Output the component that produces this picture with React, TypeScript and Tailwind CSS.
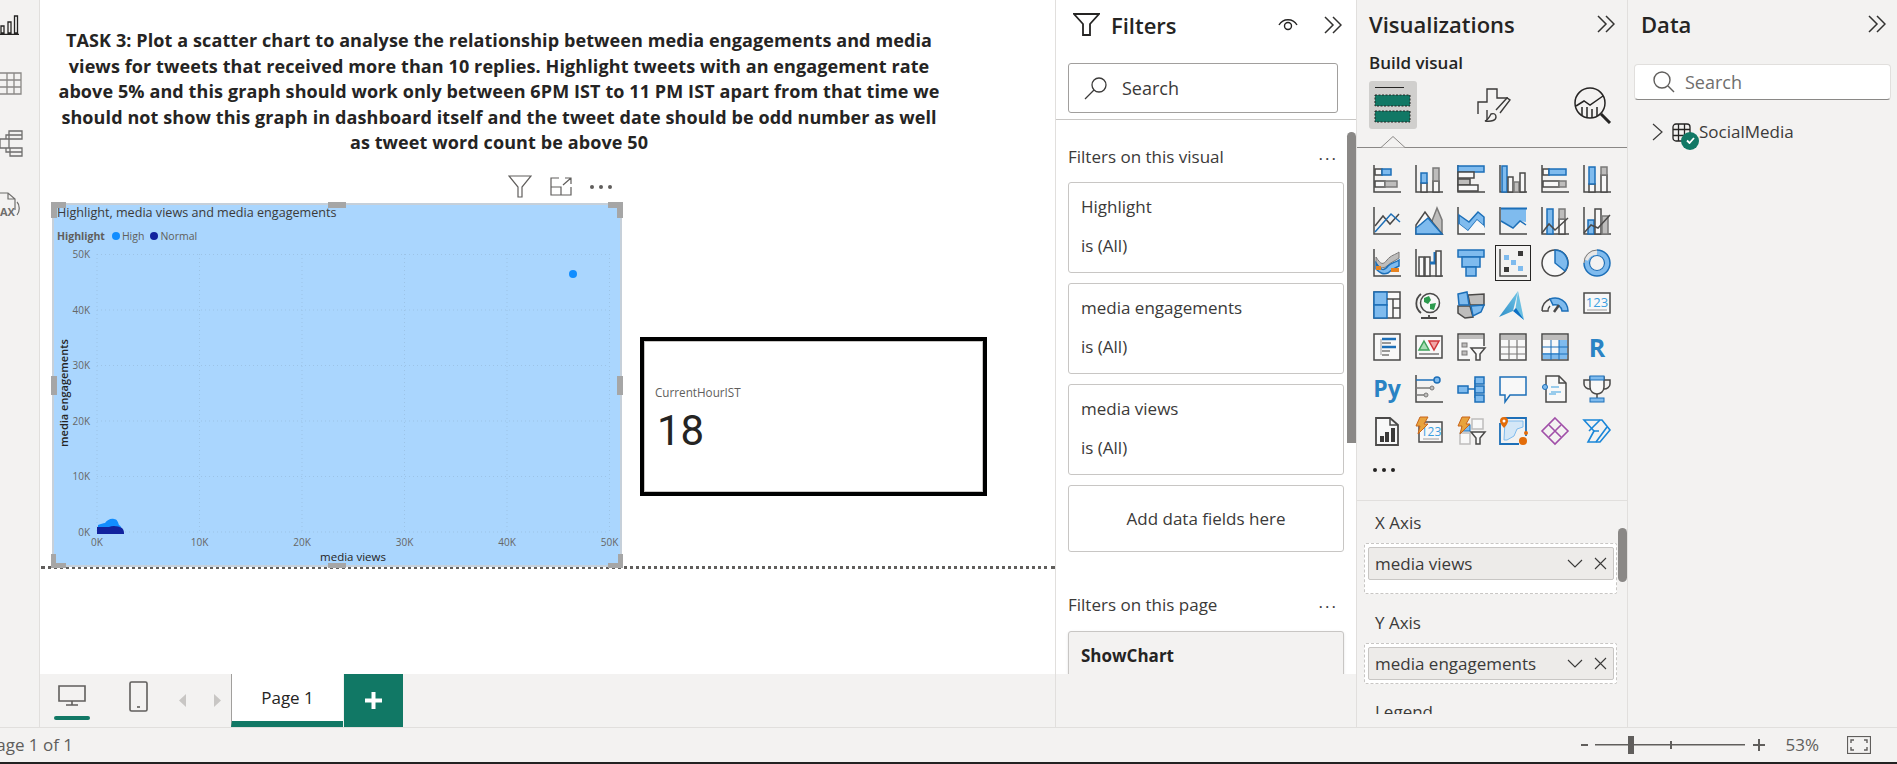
import type { ReactNode } from "react"

const D = "#4a4948"
const B = "#1c6fb8"
const L = "#7fbbee"
const G = "#bebdbc"
const W = "#f8f8f8"
const M = "#7a7978"

function Box({ x, y, w, h, f = W, s = D }: { x: number; y: number; w: number; h: number; f?: string; s?: string }) {
  return <rect x={x} y={y} width={w} height={h} fill={f} stroke={s} strokeWidth="1.5" />
}
const Ax = () => <path d="M1 0V27H28" fill="none" stroke={D} strokeWidth="1.5" />
const Line = ({ p, c = D, w = 1.5 }: { p: string; c?: string; w?: number }) => (
  <polyline points={p} fill="none" stroke={c} strokeWidth={w} />
)
const Poly = ({ p, f = L, s = B }: { p: string; f?: string; s?: string }) => (
  <polygon points={p} fill={f} stroke={s} strokeWidth="1.5" />
)

const vizIcons: ReactNode[] = [
  <><Ax /><Box x={2} y={4} w={7} h={6} /><Box x={9} y={4} w={9} h={6} f={L} s={B} /><Box x={2} y={16} w={10} h={6} /><Box x={12} y={16} w={12} h={6} f={G} s={M} /></>,
  <><Ax /><Box x={6} y={18} w={6} h={9} /><Box x={6} y={8} w={6} h={10} f={L} s={B} /><Box x={18} y={16} w={6} h={11} /><Box x={18} y={3} w={6} h={13} f={G} s={M} /></>,
  <><Ax /><Box x={1} y={1} w={26} h={6} f={L} s={B} /><Box x={1} y={7} w={16} h={6} /><Box x={1} y={14} w={12} h={6} f={G} s={D} /><Box x={1} y={20} w={20} h={6} /></>,
  <><Ax /><Box x={3} y={1} w={5} h={26} f={L} s={B} /><Box x={9} y={12} w={5} h={15} /><Box x={15} y={17} w={5} h={10} f={G} s={M} /><Box x={21} y={8} w={5} h={19} /></>,
  <><Ax /><Box x={2} y={4} w={6} h={6} /><Box x={8} y={4} w={17} h={6} f={L} s={B} /><Box x={2} y={16} w={16} h={6} /><Box x={18} y={16} w={7} h={6} f={G} s={M} /></>,
  <><Ax /><Box x={6} y={19} w={6} h={8} /><Box x={6} y={2} w={6} h={17} f={L} s={B} /><Box x={18} y={10} w={6} h={17} /><Box x={18} y={2} w={6} h={8} f={G} s={M} /></>,

  <><Ax /><Line p="2,19 10,9 17,17 26,7" /><Line p="2,25 10,16 18,7 27,15" c={B} /></>,
  <><Poly p="17,14 22,1 27,13 27,27 17,27" f={G} s={M} /><Poly p="1,27 1,18 10,5 18,16 27,27" f={W} s={D} /><Poly p="1,27 1,21 6,17 13,11 27,27" f={L} s={B} /></>,
  <><Ax /><Poly p="2,8 12,15 21,5 27,10 27,19 20,13 11,24 2,17" /><polygon points="2,17 11,24 20,13 27,19 27,26 2,26" fill={W} /></>,
  <><Ax /><polygon points="2,2 27,2 27,15 21,14 14,20 2,14" fill={L} /><Line p="2,14 14,21 21,14 27,18" c={B} /><path d="M2 1.5H28" stroke={B} strokeWidth="2" /></>,
  <><Ax /><Box x={6} y={2} w={6} h={25} f={L} s={B} /><Box x={18} y={12} w={6} h={15} /><Box x={18} y={2} w={6} h={10} f={G} s={M} /><Line p="1,26 8,17 14,23 27,11" /></>,
  <><Ax /><Box x={5} y={13} w={6} h={14} f={L} s={B} /><Box x={12} y={2} w={6} h={25} /><Box x={19} y={9} w={6} h={18} f={G} s={M} /><Line p="1,26 8,18 15,21 27,8" /></>,

  <><Ax /><path d="M3 8C8 16 10 16 14 11C18 6 22 6 26 3V9C22 12 18 13 14 17C10 20 7 19 3 14Z" fill={G} stroke={M} /><path d="M3 14C8 22 11 22 15 17C19 13 22 14 26 11V17C22 19 19 20 15 24C10 26 7 24 3 20Z" fill={L} stroke={B} strokeWidth="1.5" /><rect x="3" y="17" width="5" height="4" fill="#e8831f" /><rect x="18" y="19" width="8" height="4" fill="#e8831f" /></>,
  <><Ax /><Box x={4} y={8} w={5} h={19} /><Box x={10} y={8} w={5} h={19} /><path d="M15 14H20V3" fill="none" stroke={B} strokeWidth="3" /><Box x={21} y={2} w={5} h={25} /></>,
  <><Box x={1} y={1} w={26} h={7} f={L} s={B} /><Box x={5} y={8} w={18} h={10} f={L} s={B} /><Box x={9} y={18} w={10} h={9} f={L} s={B} /></>,
  <><Ax /><rect x="5" y="6" width="5" height="5" fill={L} /><rect x="19" y="2" width="5" height="5" fill="#3b3a39" /><rect x="12" y="11" width="5" height="5" fill={L} /><rect x="5" y="18" width="5" height="5" fill="#3b3a39" /><rect x="19" y="17" width="5" height="5" fill={L} /></>,
  <><circle cx="14" cy="14" r="13" fill={W} stroke={D} strokeWidth="1.5" /><path d="M14 14V1A13 13 0 0 1 24 22Z" fill={L} stroke={B} strokeWidth="1.5" /></>,
  <><circle cx="14" cy="14" r="10.5" fill="none" stroke={L} strokeWidth="5" /><path d="M2.5 11A11 11 0 0 1 14 3.5" fill="none" stroke="#e8e7e6" strokeWidth="5" /><path d="M1 14A13 13 0 0 1 14 1" fill="none" stroke={M} strokeWidth="1" /><path d="M14 1A13 13 0 1 1 1 14" fill="none" stroke={B} strokeWidth="1.5" /><circle cx="14" cy="14" r="7.5" fill="#f3f2f1" stroke={B} strokeWidth="1.2" /></>,

  <><Box x={1} y={1} w={26} h={26} /><Box x={1} y={1} w={13} h={13} f={L} s={B} /><Box x={1} y={14} w={13} h={13} f={L} s={B} /><path d="M14 8H27M20 8V27M20 17H27" stroke={D} strokeWidth="1.5" /></>,
  <><path d="M6 3A12 12 0 0 0 6 22M14 24V27M6 27H22" fill="none" stroke={D} strokeWidth="1.8" /><circle cx="15" cy="12" r="9.5" fill={W} stroke={D} strokeWidth="1.5" /><path d="M9 7L14 5L16 9L13 13L9 11ZM15 13L21 12L19 19L15 18Z" fill="#2d9b4e" /></>,
  <><Poly p="1,15 13,15 16,26 8,27 1,22" f={G} s={D} /><polygon points="11,4 27,3 27,14 13,14" fill={G} stroke={D} strokeWidth="1.5" /><Poly p="1,3 10,1 12,14 2,14" /><Poly p="14,15 27,14 24,21 16,25" /></>,
  <><defs><linearGradient id="azm" x1="0" y1="1" x2="1" y2="0"><stop offset="0" stopColor="#2f8fc8" /><stop offset="1" stopColor="#6fc4e6" /></linearGradient></defs><polygon points="19,0 0,26 14,20" fill="url(#azm)" /><polygon points="19,0 25,29 16,21" fill="#69bfe2" /><polygon points="14,20 25,29 17,17" fill="#0c6fc4" /></>,
  <><path d="M1 20A13 13 0 0 1 9 8" fill="none" stroke={D} strokeWidth="1.4" /><path d="M9 8A13 13 0 0 1 27 20H21A7 7 0 0 0 12 14Z" fill={L} stroke={B} strokeWidth="1.5" /><path d="M1 20H7A7 7 0 0 1 9 15" fill="none" stroke={D} strokeWidth="1.5" /><path d="M13 21L18 14" stroke={D} strokeWidth="2.5" /></>,
  <><Box x={1} y={2} w={26} h={20} f={W} s={D} /><path d="M4 19H24" stroke={G} strokeWidth="1.5" /><text x="14" y="16" textAnchor="middle" fontSize="13" fill="#3b9fe0">123</text></>,

  <><Box x={1} y={1} w={26} h={26} /><path d="M8 6V22" stroke={G} strokeWidth="1.5" /><path d="M9 6H23M9 14H23" stroke={B} strokeWidth="2.5" /><path d="M9 10H18M9 18H17M9 22H16" stroke={M} strokeWidth="1.5" /></>,
  <><Box x={1} y={3} w={26} h={22} /><path d="M4 21H24" stroke={M} strokeWidth="1.5" /><polygon points="9,8 14,17 4,17" fill="#a9dbb4" stroke="#3ea35a" strokeWidth="1.5" /><polygon points="14,8 24,8 19,17" fill="#f1a6a6" stroke="#d13438" strokeWidth="1.5" /></>,
  <><path d="M13 27H1V1H27V13" fill={W} stroke={D} strokeWidth="1.5" /><rect x="2" y="2" width="24" height="4" fill={G} /><rect x="5" y="10" width="5" height="4" fill={G} stroke={M} /><rect x="5" y="18" width="5" height="4" fill={G} stroke={M} /><path d="M14 15H28L23 21V27H19V21Z" fill={W} stroke={D} strokeWidth="1.5" /></>,
  <><Box x={1} y={1} w={26} h={26} /><rect x="2" y="2" width="24" height="5" fill={G} /><path d="M10 7V27M18 7V27M1 14H27M1 21H27" stroke={M} strokeWidth="1.2" /></>,
  <><Box x={1} y={1} w={26} h={26} /><rect x="2" y="2" width="24" height="5" fill={G} /><rect x="18" y="7" width="8" height="19" fill={L} /><rect x="2" y="20" width="24" height="6" fill={L} /><path d="M10 7V27M18 7V27M1 14H27M1 21H27" stroke={B} strokeWidth="1" /></>,
  <text x="14" y="24" textAnchor="middle" fontSize="25" fontWeight="700" fill="#2a83c4">R</text>,

  <text x="14" y="22" textAnchor="middle" fontSize="23" fontWeight="700" fill="#2a83c4">Py</text>,
  <><Ax /><path d="M1 5H20" stroke={B} strokeWidth="1.5" /><circle cx="22" cy="5" r="3" fill={L} stroke={B} strokeWidth="1.5" /><path d="M1 13H15M1 20H9" stroke={M} strokeWidth="1.5" /><circle cx="17" cy="13" r="2" fill={G} stroke={M} /><circle cx="11" cy="20" r="2" fill={G} stroke={M} /></>,
  <><Box x={1} y={11} w={10} h={7} f={L} s={B} /><path d="M11 14H18M18 5V23" stroke={B} strokeWidth="1.5" fill="none" /><Box x={18} y={2} w={9} h={7} f={L} s={B} /><Box x={18} y={11} w={9} h={7} f={L} s={B} /><Box x={18} y={20} w={9} h={7} f={L} s={B} /></>,
  <path d="M1 2H27V20H11L6 27V20H1Z" fill={W} stroke={B} strokeWidth="1.5" />,
  <><path d="M5 1H18L25 8V27H5Z" fill={W} stroke={D} strokeWidth="1.5" /><path d="M18 1V8H25" fill="none" stroke={D} strokeWidth="1.5" /><circle cx="4" cy="12" r="2.5" fill={L} stroke={B} /><path d="M10 12H18M10 17H20M8 19H15" stroke="#3b9fe0" strokeWidth="1.2" /></>,
  <><path d="M7 2H21V12C21 17 17 19 14 19C11 19 7 17 7 12Z" fill={W} stroke={D} strokeWidth="1.5" /><path d="M7 5H1V9C1 12 4 14 7 14M21 5H27V9C27 12 24 14 21 14M14 19V23" fill="none" stroke={D} strokeWidth="1.5" /><rect x="7" y="1" width="14" height="4" fill={L} stroke={B} /><rect x="7" y="23" width="14" height="4" fill={L} stroke={B} /></>,

  <><path d="M3 1H17L25 8V28H3Z" fill={W} stroke={D} strokeWidth="1.8" /><path d="M17 1V8H25" fill="none" stroke={D} strokeWidth="1.5" /><rect x="7" y="19" width="4" height="6" fill="#3b3a39" /><rect x="12" y="15" width="4" height="10" fill="#3b3a39" /><rect x="18" y="11" width="4" height="14" fill="#3b3a39" /></>,
  <><Box x={4} y={5} w={23} h={20} f={W} s={D} /><path d="M8 22H24" stroke={G} strokeWidth="1.5" /><text x="16" y="19" textAnchor="middle" fontSize="12" fill="#3b9fe0">123</text><polygon points="5,0 13,0 9,7 13,7 3,17 5,9 1,9" fill="#e8a33d" stroke="#c8651b" /></>,
  <><rect x="15" y="2" width="11" height="10" fill={W} stroke={G} strokeWidth="1.5" /><rect x="3" y="16" width="10" height="11" fill={W} stroke={G} strokeWidth="1.5" /><rect x="5" y="8" width="8" height="6" fill={L} stroke={B} /><path d="M14 15H28L23 21V27H19V21Z" fill={W} stroke={D} strokeWidth="1.5" /><polygon points="5,0 13,0 9,7 13,7 3,17 5,9 1,9" fill="#e8a33d" stroke="#c8651b" /></>,
  <><path d="M5 1H27V19M20 27H1V6" fill="none" stroke={B} strokeWidth="1.8" /><path d="M6 4H24V10L18 12L15 19L8 23H5Z" fill="#d4e7f7" stroke={L} /><path d="M5 0C2 0 1 2 1 4C1 7 5 11 5 11C5 11 9 7 9 4C9 2 8 0 5 0Z" fill="#e36c09" /><circle cx="5" cy="4" r="1.5" fill="#fff" /><circle cx="24" cy="24" r="4" fill="#e36c09" /><circle cx="27" cy="16" r="2" fill="#e36c09" /></>,
  <g fill="none" stroke="#a04fa8" strokeWidth="1.6"><polygon points="14,1 27,14 14,27 1,14" /><path d="M8 8L20 20M20 8L8 20" /></g>,
  <g fill="none" stroke="#1a86d8" strokeWidth="1.6"><polygon points="1,3 19,3 27,13 17,25 5,25 11,14" /><path d="M17 3L6 14M24 10L13 25M11 14H16" /></g>,
]

function Chevrons() {
  return (
    <svg width="18" height="18" viewBox="0 0 18 18" fill="none" stroke="#323130" strokeWidth="1.5">
      <path d="M1 1l8 8-8 8M9 1l8 8-8 8" />
    </svg>
  )
}

function Filtercard({ title, value }: { title: string; value: string }) {
  return (
    <div className="h-[91px] w-[276px] rounded-[3px] border border-[#c8c6c4] bg-white pt-[12px] pl-[12px] text-[17px] leading-[24px] text-[#3b3a39]">
      <div>{title}</div>
      <div className="mt-[15px]">{value}</div>
    </div>
  )
}

function Well({ name, className }: { name: string; className: string }) {
  return (
    <div className={`ml-[7px] w-[253px] rounded-[2px] border border-dashed border-[#c8c6c4] bg-white pt-[3px] pl-[3px] ${className}`}>
      <div className="flex h-[33px] w-[246px] items-center justify-between rounded-[2px] border border-[#c8c6c4] bg-[#edebe9] pr-[6px] pl-[6px] text-[17px] text-[#3b3a39]">
        <span>{name}</span>
        <svg width="40" height="14" viewBox="0 0 40 14" fill="none" stroke="#3b3a39" strokeWidth="1.1">
          <path d="M1 3l7 7 7-7M28 1l11 11M39 1L28 12" />
        </svg>
      </div>
    </div>
  )
}

function ScatterPlot() {
  const xs = [0, 1, 2, 3, 4, 5]
  return (
    <svg className="absolute inset-0" width="566" height="360" viewBox="2 2 566 360" fontSize="10" fill="#666666">
      {xs.map((i) => (
        <g key={i}>
          <line x1={45 + i * 102.5} x2={45 + i * 102.5} y1="51" y2="329" stroke="#9cc3e6" strokeDasharray="1 3" />
          <line x1="45" x2="557" y1={329 - i * 55.5} y2={329 - i * 55.5} stroke="#9cc3e6" strokeDasharray="1 3" />
          <text x="38" y={332.5 - i * 55.5} textAnchor="end">{i * 10}K</text>
          <text x={45 + i * 102.5} y="343" textAnchor="middle">{i * 10}K</text>
        </g>
      ))}
      <circle cx="521" cy="71" r="4" fill="#118dff" />
      <path d="M46 331v-9c3-1 5-2 7-2 2-3 6-5 9-4 3 0 4 3 5 6 2 1 3 3 3 9Z" fill="#118dff" />
      <path d="M45 331v-7h12c4-2 9-1 13 1 2 2 2 4 2 6Z" fill="#12239e" />
    </svg>
  )
}

function Handles() {
  return (
    <>
      <div className="absolute -top-[3px] -left-[3px] h-[16px] w-[15px] border-t-[6px] border-l-[6px] border-[#a6a6a6]" />
      <div className="absolute -top-[3px] -right-[3px] h-[16px] w-[15px] border-t-[6px] border-r-[6px] border-[#a6a6a6]" />
      <div className="absolute -bottom-[3px] -left-[3px] h-[14px] w-[15px] border-b-[5px] border-l-[5px] border-[#a6a6a6]" />
      <div className="absolute -right-[3px] -bottom-[3px] h-[14px] w-[15px] border-r-[5px] border-b-[5px] border-[#a6a6a6]" />
      <div className="absolute -top-[3px] left-[274px] h-[6px] w-[18px] bg-[#a6a6a6]" />
      <div className="absolute -bottom-[3px] left-[274px] h-[5px] w-[18px] bg-[#a6a6a6]" />
      <div className="absolute top-[171px] -left-[3px] h-[19px] w-[6px] bg-[#a6a6a6]" />
      <div className="absolute top-[171px] -right-[3px] h-[19px] w-[6px] bg-[#a6a6a6]" />
    </>
  )
}

function Canvas() {
  return (
    <main className="relative min-h-0 flex-1 overflow-hidden bg-white">
      <div className="mt-[28px] w-[918px] text-center text-[18px] leading-[25.5px] font-bold tracking-[0.1px] whitespace-nowrap text-[#252423]">
        <div>TASK 3: Plot a scatter chart to analyse the relationship between media engagements and media</div>
        <div>views for tweets that received more than 10 replies. Highlight tweets with an engagement rate</div>
        <div>above 5% and this graph should work only between 6PM IST to 11 PM IST apart from that time we</div>
        <div>should not show this graph in dashboard itself and the tweet date should be odd number as well</div>
        <div>as tweet word count be above 50</div>
      </div>

      <div className="mt-[47.5px] flex items-start pl-[12px]">
        <div className="relative h-[364px] w-[570px] shrink-0 border-2 border-[#c6d0da] bg-[#aad6fe]">
          <ScatterPlot />
          <div className="relative pl-[3px] text-[12.6px] leading-[16px] text-[#3b3a39]">Highlight, media views and media engagements</div>
          <div className="relative mt-[8px] flex items-center pl-[3px] text-[10.5px] leading-[14px] text-[#605e5c]">
            <b>Highlight</b>
            <span className="ml-[7px] h-[8px] w-[8px] rounded-full bg-[#118dff]" />
            <span className="ml-[2px]">High</span>
            <span className="ml-[6px] h-[8px] w-[8px] rounded-full bg-[#12239e]" />
            <span className="ml-[2px]">Normal</span>
          </div>
          <div className="absolute top-[188px] left-[9px] -translate-x-1/2 -translate-y-1/2 -rotate-90 text-[11px] leading-none font-semibold whitespace-nowrap text-[#252423]">media engagements</div>
          <div className="absolute top-[345px] left-[299px] -translate-x-1/2 text-[11.5px] leading-[14px] font-medium whitespace-nowrap text-[#252423]">media views</div>
          <Handles />
          <div className="absolute -top-[30px] right-[8px] flex items-center gap-[18px]">
            <svg width="24" height="23" viewBox="0 0 24 23" fill="none" stroke="#605e5c" strokeWidth="1.2">
              <path d="M1 1h22l-9 11v10h-4V12Z" />
            </svg>
            <svg width="22" height="19" viewBox="0 0 22 19" fill="none" stroke="#605e5c" strokeWidth="1.2">
              <path d="M9 1H1v17h20v-8M1 10h10v8M13 8l8-7M15 1h6v6" />
            </svg>
            <svg width="22" height="4" viewBox="0 0 22 4" fill="#605e5c">
              <circle cx="2" cy="2" r="2" />
              <circle cx="11" cy="2" r="2" />
              <circle cx="20" cy="2" r="2" />
            </svg>
          </div>
        </div>

        <div className="mt-[134px] ml-[18px] h-[159px] w-[347px] shrink-0 border-4 border-black bg-white">
          <div className="h-full border border-[#c8c6c4] pt-[42px] pl-[10px]">
            <div className="text-[11.7px] leading-[16px] text-[#605e5c]">CurrentHourIST</div>
            <div className="mt-[6px] pl-[2px] font-['Roboto',sans-serif] text-[42px] leading-[50px] text-[#252423]">18</div>
          </div>
        </div>
      </div>
      <div className="-mt-[1px] ml-[1px] border-t-[3px] border-dotted border-[#605e5c]" />
    </main>
  )
}

function TabBar() {
  return (
    <div className="flex h-[53px] bg-[#f3f2f1]">
      <div className="ml-[14px] flex w-[36px] flex-col items-center pt-[11px]">
        <svg width="28" height="21" viewBox="0 0 28 21" fill="none" stroke="#605e5c" strokeWidth="1.6">
          <path d="M1 1h26v15H1ZM14 16v4M8 20h12" />
        </svg>
        <div className="mt-[10px] h-[4px] w-[36px] rounded-full bg-[#117865]" />
      </div>
      <svg className="mt-[7px] ml-[39px]" width="19" height="31" viewBox="0 0 19 31" fill="none" stroke="#605e5c" strokeWidth="1.6">
        <rect x="1" y="1" width="17" height="29" rx="1.5" />
        <path d="M8 26h3" />
      </svg>
      <svg className="mt-[20px] ml-[31px]" width="8" height="13" viewBox="0 0 8 13" fill="#c8c6c4">
        <path d="M7 0v13L0 6.5Z" />
      </svg>
      <svg className="mt-[20px] ml-[26px]" width="8" height="13" viewBox="0 0 8 13" fill="#c8c6c4">
        <path d="M1 0v13l7-6.5Z" />
      </svg>
      <div className="ml-[10px] flex w-[112px] items-center justify-center border-b-[6px] border-l border-b-[#117865] border-l-[#a19f9d] bg-white pt-[1px] text-[17px] font-medium text-[#252423]">Page 1</div>
      <div className="flex w-[60px] items-center justify-center border-l border-[#f3f2f1] bg-[#117865]">
        <svg width="17" height="17" viewBox="0 0 17 17" fill="#ffffff">
          <path d="M6.5 0h4v6.5H17v4h-6.5V17h-4v-6.5H0v-4h6.5Z" />
        </svg>
      </div>
    </div>
  )
}

function Filters() {
  return (
    <aside className="relative flex w-[302px] shrink-0 flex-col border-r border-l border-[#e1dfdd] bg-white">
      <div className="flex h-[50px] items-center pr-[14px] pb-[1px] pl-[17px] text-[#252423]">
        <svg width="27" height="23" viewBox="0 0 27 23" fill="none" stroke="#252423" strokeWidth="1.8">
          <path d="M1 1h25l-9 10v11h-7V11Z" />
        </svg>
        <span className="ml-[11px] text-[22px] leading-none font-semibold">Filters</span>
        <svg className="mr-[26px] ml-auto" width="20" height="13" viewBox="0 0 20 13" fill="none" stroke="#252423" strokeWidth="1.4">
          <path d="M1 7C5 0 15 0 19 7" />
          <circle cx="10" cy="8" r="3.5" />
        </svg>
        <Chevrons />
      </div>
      <div className="mt-[13px] ml-[12px] flex h-[50px] w-[270px] items-center rounded-[3px] border border-[#a19f9d] pl-[15px] text-[18px] text-[#3b3a39]">
        <svg width="24" height="23" viewBox="0 0 24 23" fill="none" stroke="#3b3a39" strokeWidth="1.3">
          <circle cx="15" cy="8" r="7" />
          <path d="M10 13L1 22" />
        </svg>
        <span className="ml-[14px]">Search</span>
      </div>
      <div className="mt-[6px] border-b border-[#c8c6c4]" />

      <div className="min-h-0 flex-1 overflow-hidden pl-[12px]">
        <div className="flex h-[62px] w-[270px] justify-between pt-[25px] text-[17px] leading-[24px] text-[#3b3a39]">
          <span>Filters on this visual</span>
          <span className="mt-[-3px] tracking-[2px]">...</span>
        </div>
        <div className="flex flex-col gap-[10px]">
          <Filtercard title="Highlight" value="is (All)" />
          <Filtercard title="media engagements" value="is (All)" />
          <Filtercard title="media views" value="is (All)" />
          <div className="flex h-[67px] w-[276px] items-center justify-center rounded-[3px] border border-[#c8c6c4] pt-[1px] text-[17px] text-[#3b3a39]">Add data fields here</div>
        </div>
        <div className="flex h-[79px] w-[270px] justify-between pt-[41px] text-[17px] leading-[24px] text-[#3b3a39]">
          <span>Filters on this page</span>
          <span className="mt-[-3px] tracking-[2px]">...</span>
        </div>
        <div className="h-[60px] w-[276px] rounded-[3px] border border-[#c8c6c4] bg-[#f3f2f1] pt-[12px] pl-[12px] text-[17px] leading-[24px] font-bold text-[#252423] shadow-sm">ShowChart</div>
      </div>
      <div className="h-[53px] bg-[#f3f2f1]" />
      <div className="absolute top-[132px] right-0 h-[311px] w-[9px] rounded-t-full bg-[#8a8886]" />
    </aside>
  )
}

function Visualizations() {
  return (
    <aside className="relative flex w-[271px] shrink-0 flex-col border-r border-[#e1dfdd] bg-[#f3f2f1]">
      <div className="flex h-[50px] items-center justify-between pr-[12px] pb-[2px] pl-[12px]">
        <span className="text-[22px] leading-none font-semibold text-[#252423]">Visualizations</span>
        <Chevrons />
      </div>
      <div className="flex h-[26px] items-center pl-[12px] text-[17px] font-semibold text-[#252423]">Build visual</div>
      <div className="mt-[5px] flex items-center pl-[12px]">
        <div className="h-[48px] w-[48px] rounded-[3px] bg-[#d0cfcd]">
          <svg width="48" height="48" viewBox="0 0 48 48">
            <path d="M6 6.5h29" stroke="#252423" />
            <rect x="6" y="14" width="35" height="11" fill="#117865" stroke="#252423" strokeDasharray="2 1.5" />
            <rect x="6" y="30" width="35" height="11" fill="#117865" stroke="#252423" strokeDasharray="2 1.5" />
          </svg>
        </div>
        <svg className="ml-[60px]" width="34" height="35" viewBox="0 0 34 35" fill="none" stroke="#3b3a39" strokeWidth="1.4">
          <path d="M1 26V14h9V1h10v9h11M10 22v10" />
          <path d="M14 26c3-1 5 0 5 3s-4 5-11 4c3-1 4-3 6-7Z" />
          <path d="M19 22l11-12 3 2-10 13" />
        </svg>
        <svg className="ml-[63px]" width="38" height="37" viewBox="0 0 38 37" fill="none" stroke="#252423" strokeWidth="1.5">
          <circle cx="16" cy="16" r="15" />
          <path d="M2 19l8-5 6 4 13-9M8 20v8M13 20v10M18 22v9M23 20v9" />
          <path d="M27 27l9 9" strokeWidth="3" />
        </svg>
      </div>
      <div className="relative h-[19px] border-b border-[#8a8886]">
        <svg className="absolute -bottom-[1px] left-[24px]" width="24" height="12" viewBox="0 0 24 12" fill="#f3f2f1" stroke="#8a8886">
          <path d="M0 11.5L12 .5 24 11.5" />
        </svg>
      </div>
      <div className="grid grid-cols-[repeat(6,28px)] gap-[14px] pt-[17px] pl-[16px]">
        {vizIcons.map((icon, i) => (
          <div key={i} className={`h-[28px] w-[28px] ${i === 15 ? "outline-[1.5px] outline-offset-[3px] outline-[#252423]" : ""}`}>
            <svg width="28" height="28" viewBox="0 0 28 28" className="overflow-visible">{icon}</svg>
          </div>
        ))}
      </div>
      <div className="mt-[23px] mb-[28px] flex gap-[5px] pl-[16px]">
        <span className="h-[4px] w-[4px] rounded-full bg-[#252423]" />
        <span className="h-[4px] w-[4px] rounded-full bg-[#252423]" />
        <span className="h-[4px] w-[4px] rounded-full bg-[#252423]" />
      </div>
      <div className="min-h-0 flex-1 overflow-hidden border-t border-[#e1dfdd] pt-[10px] text-[17px] leading-[24px] text-[#3b3a39]">
        <div className="pl-[18px]">X Axis</div>
        <Well name="media views" className="mt-[8px] h-[51px]" />
        <div className="mt-[17px] pl-[18px]">Y Axis</div>
        <Well name="media engagements" className="mt-[8px] h-[41px]" />
        <div className="mt-[16px] pl-[18px]">Legend</div>
      </div>
      <div className="h-[13px]" />
      <div className="absolute top-[528px] right-0 h-[54px] w-[9px] rounded-full bg-[#8a8886]" />
    </aside>
  )
}

function DataPane() {
  return (
    <aside className="flex min-w-0 flex-1 flex-col bg-[#f3f2f1]">
      <div className="flex h-[50px] items-center justify-between pr-[11px] pb-[2px] pl-[13px]">
        <span className="text-[22px] leading-none font-semibold text-[#252423]">Data</span>
        <Chevrons />
      </div>
      <div className="mt-[14px] ml-[6px] flex h-[36px] w-[257px] items-center rounded-[4px] border border-[#e1dfdd] border-b-[#8a8886] bg-white pl-[18px] text-[18px] text-[#6f6e6d]">
        <svg width="22" height="22" viewBox="0 0 22 22" fill="none" stroke="#605e5c" strokeWidth="1.4">
          <circle cx="9" cy="9" r="8" />
          <path d="M15 15l6 6" />
        </svg>
        <span className="ml-[10px]">Search</span>
      </div>
      <div className="mt-[20px] flex h-[24px] items-center pl-[24px] text-[17px] text-[#3b3a39]">
        <svg width="11" height="18" viewBox="0 0 11 18" fill="none" stroke="#3b3a39" strokeWidth="1.2">
          <path d="M1 1l9 8-9 8" />
        </svg>
        <div className="relative ml-[9px] h-[19px] w-[19px]">
          <svg width="19" height="19" viewBox="0 0 19 19" fill="none" stroke="#252423" strokeWidth="1.3">
            <rect x="1" y="1" width="17" height="17" rx="3" />
            <path d="M6.5 1v17M12.5 1v17M1 6.5h17M1 12.5h17" />
          </svg>
          <div className="absolute top-[9px] left-[9px] flex h-[18px] w-[18px] items-center justify-center rounded-full bg-[#117865]">
            <svg width="9" height="7" viewBox="0 0 9 7" fill="none" stroke="#ffffff" strokeWidth="1.8">
              <path d="M1 3.5l2.5 2.5L8 1" />
            </svg>
          </div>
        </div>
        <span className="ml-[8px]">SocialMedia</span>
      </div>
    </aside>
  )
}

function StatusBar() {
  return (
    <footer className="flex h-[35px] items-center justify-between border-t border-[#e1dfdd] bg-[#f3f2f1] text-[#605e5c]">
      <span className="-ml-[14px] text-[17px]">Page 1 of 1</span>
      <div className="flex items-center pr-[26px]">
        <svg width="7" height="3" viewBox="0 0 7 3" fill="#605e5c"><rect width="7" height="2" /></svg>
        <svg className="ml-[7px]" width="150" height="18" viewBox="0 0 150 18" fill="#605e5c">
          <rect y="8" width="150" height="1.5" />
          <rect x="33" width="6" height="18" />
          <rect x="75" y="5" width="2" height="8" />
        </svg>
        <svg className="ml-[8px]" width="12" height="12" viewBox="0 0 12 12" fill="#605e5c"><path d="M5 0h2v5h5v2H7v5H5V7H0V5h5Z" /></svg>
        <span className="ml-[21px] text-[17px]">53%</span>
        <svg className="ml-[28px]" width="24" height="18" viewBox="0 0 24 18" fill="none" stroke="#605e5c">
          <rect x=".5" y=".5" width="23" height="17" strokeWidth="1.2" />
          <path d="M7 4H4v3M17 4h3v3M7 14H4v-3M17 14h3v-3" strokeWidth="1.4" />
        </svg>
      </div>
    </footer>
  )
}

export default function App() {
  return (
    <div className="flex h-[764px] w-[1897px] flex-col overflow-hidden bg-[#f3f2f1] font-['Open_Sans','Noto_Sans',sans-serif]">
      <div className="flex min-h-0 flex-1">
        <nav className="flex w-[40px] shrink-0 flex-col overflow-hidden border-r border-[#e1dfdd] pt-[15px]">
          <svg width="20" height="20" viewBox="0 0 20 20" fill="none" stroke="#252423" strokeWidth="1.3">
            <path d="M0 19.5h19M1 11h3v7H1ZM8 7h3v11H8ZM14.5 1h3v17h-3Z" />
          </svg>
          <svg className="mt-[37px]" width="22" height="23" viewBox="0 0 22 23" fill="none" stroke="#8a8886" strokeWidth="1.3">
            <path d="M0 1h21v21H0M0 8h21M0 15h21M7 1v21M14 1v21" />
          </svg>
          <svg className="mt-[35px]" width="23" height="27" viewBox="0 0 23 27" fill="none" stroke="#6f6e6d" strokeWidth="1.3">
            <path d="M9 1h13v8H9ZM9 5h13M0 9h9v9H0ZM10 18h12v8H10ZM10 22h12M9 5H6v4M6 18v4h4" />
          </svg>
          <svg className="mt-[35px]" width="21" height="25" viewBox="0 0 21 25" fill="none" stroke="#6f6e6d" strokeWidth="1.2">
            <path d="M0 1h8l7 6v11M8 1v6h7M17 10c3 3 3 9 0 13" />
            <text x="0" y="24" fontSize="11" fontWeight="700" fill="#6f6e6d" stroke="none">AX</text>
          </svg>
        </nav>
        <div className="flex w-[1015px] shrink-0 flex-col">
          <Canvas />
          <TabBar />
        </div>
        <Filters />
        <Visualizations />
        <DataPane />
      </div>
      <StatusBar />
      <div className="h-[2px] bg-[#222222]" />
    </div>
  )
}
